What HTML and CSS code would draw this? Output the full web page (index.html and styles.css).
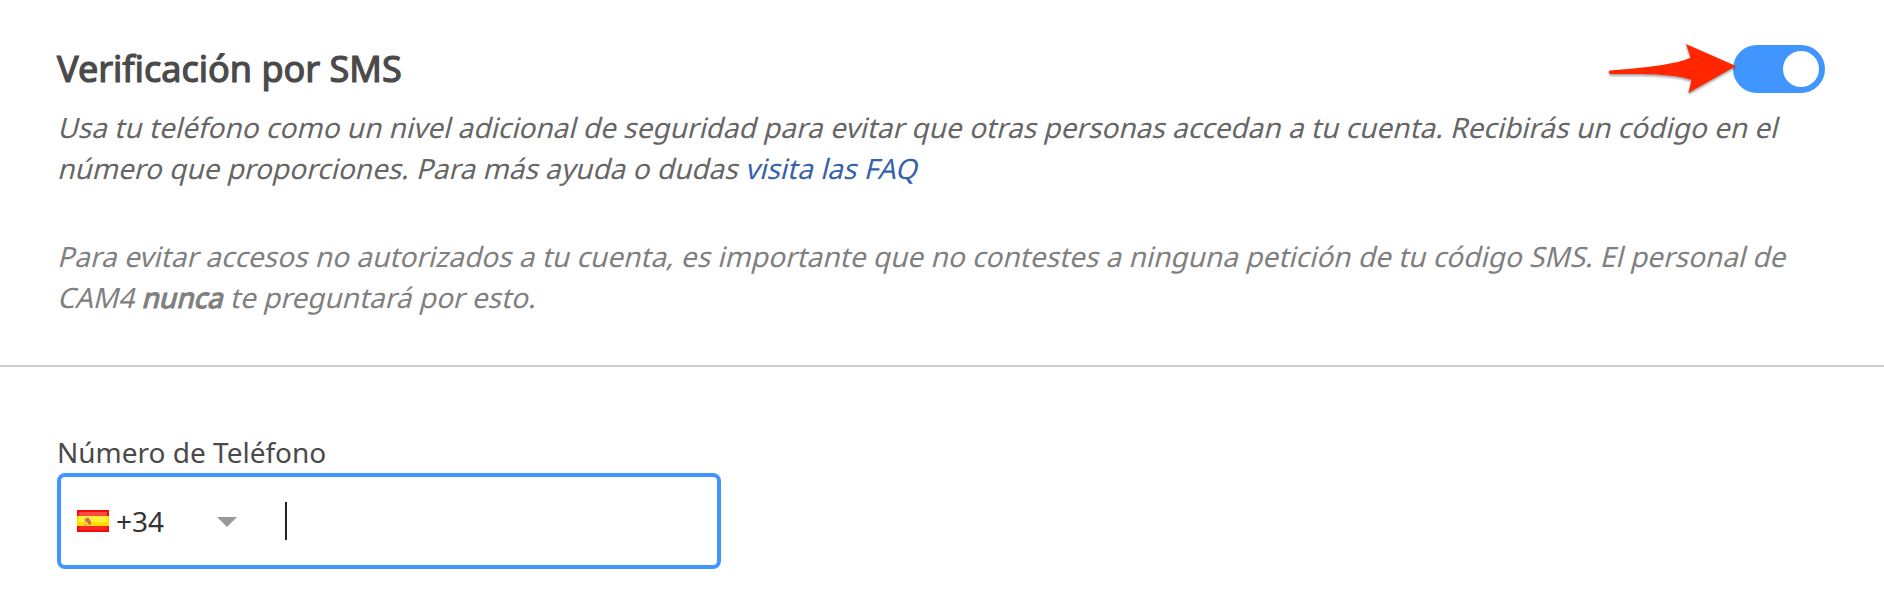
FILE: index.html
```html
<!DOCTYPE html>
<html lang="es">
<head>
<meta charset="utf-8">
<title>Verificación por SMS</title>
<link rel="stylesheet" href="styles.css">
</head>
<body>
<section class="intro">
  <header class="head">
    <h1 class="title">Verificación por SMS</h1>
    <div class="switch"><span class="knob"></span>
      <svg class="arrow" width="140" height="66" viewBox="0 0 140 66"><path d="M8 28.5C38 26 76 22.500 88.500 15.500L84 2L134 24L86.300 51L89.500 38C72 31.500 40 32 8.500 32A1.800 1.800 0 0 1 8 28.500Z" fill="#ff2600"/></svg>
    </div>
  </header>
  <p class="text"><span class="line">Usa tu teléfono como un nivel adicional de seguridad para evitar que otras personas accedan a tu cuenta. Recibirás un código en el</span><span class="line">número que proporciones. Para más ayuda o dudas <a class="link">visita las FAQ</a></span></p>
  <p class="text note"><span class="line">Para evitar accesos no autorizados a tu cuenta, es importante que no contestes a ninguna petición de tu código SMS. El personal de</span><span class="line">CAM4 <b class="strong">nunca</b> te preguntará por esto.</span></p>
</section>
<section class="form">
  <label class="label">Número de Teléfono</label>
  <div class="field">
    <svg class="flag" width="32" height="22" viewBox="0 0 32 22"><rect width="32" height="22" fill="#f40a0a"/><rect x="2" y="2" width="28" height="4" fill="#fb4a42"/><rect y="6" width="32" height="10" fill="#ffde00"/><rect x="2" y="6" width="28" height="6" fill="#fff03c"/><rect x="2" y="16" width="28" height="4" fill="#f8281e"/><path d="M7 9l3-1 4 2v5h-3v-3H8z" fill="#e59a6a"/><path d="M9 8h3v2l2 2v2h-2l-3-3z" fill="#d06a58"/><path d="M7 14h3v2H7z" fill="#d8b070"/></svg>
    <span class="code">+34</span>
    <span class="caret"></span>
    <span class="cursor"></span>
  </div>
</section>
</body>
</html>
```
FILE: styles.css
```css
* { box-sizing: border-box; }
body { margin: 0; background: #fff; font-family: "Noto Sans", sans-serif; font-size: 28px; }
.intro { height: 367px; padding: 45px 59px 0 57px; border-bottom: 2px solid #ccc; }
.head { display: flex; justify-content: space-between; align-items: flex-start; height: 62px; }
.title { margin: 0; font-size: 36px; line-height: 48px; font-weight: 400; color: #4a4a4a; -webkit-text-stroke: 1.2px #4a4a4a; }
.switch { position: relative; width: 92px; height: 48px; border-radius: 24px; background: #4095ff; padding: 6px; display: flex; justify-content: flex-end; }
.knob { width: 36px; height: 36px; border-radius: 50%; background: #fff; }
.arrow { position: absolute; right: 83px; top: -3px; filter: drop-shadow(0 2px 1px rgba(0, 0, 0, .35)); }
.text { margin: 0 0 47px; color: #666; line-height: 41px; }
.line { display: block; white-space: nowrap; transform: skewX(-14deg); transform-origin: 0 31px; }
.note { color: #808080; }
.link { color: #3762a9; }
.strong { font-weight: 400; -webkit-text-stroke: 1.2px; }
.form { padding: 66px 57px 0; }
.label { display: block; line-height: 39px; margin-bottom: 1px; color: #4a4a4a; }
.field { display: flex; align-items: center; width: 664px; height: 96px; border: 4px solid #4095ff; border-radius: 8px; padding-left: 16px; }
.code { width: 101px; margin-left: 7px; color: #333; }
.caret { margin-top: 2px; border: 10px solid transparent; border-top-color: #999; border-bottom: 0; }
.cursor { width: 2px; height: 38px; background: #222; margin-left: 48px; }
```
